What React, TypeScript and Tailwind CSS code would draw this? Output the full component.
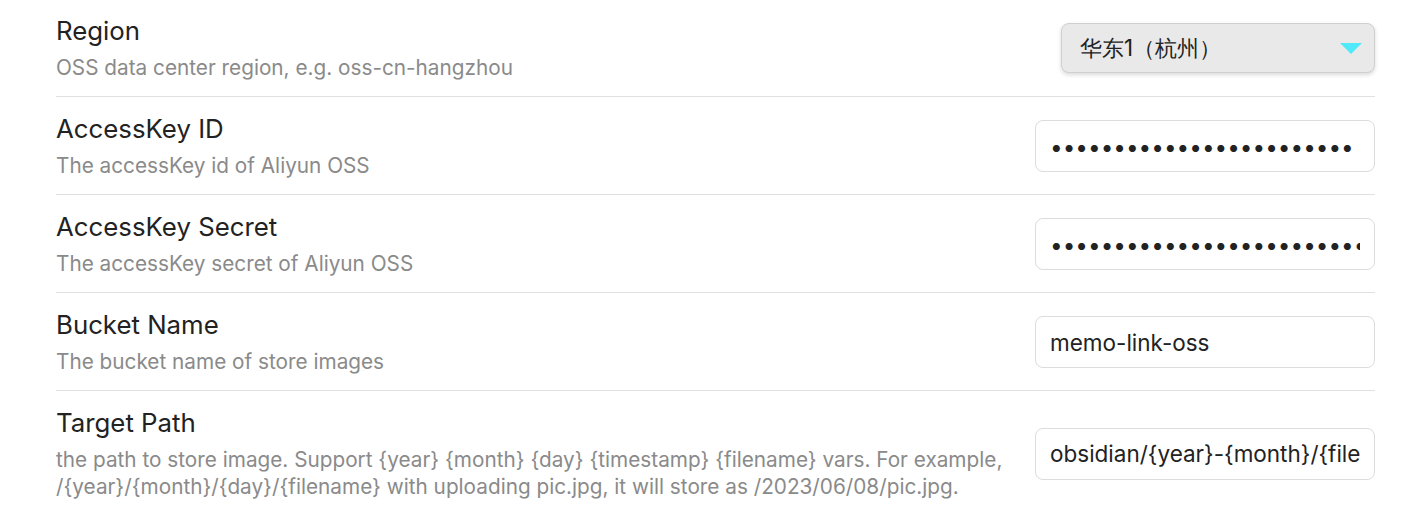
import { useState } from "react";

type Row = {
    name: string;
    desc: string[];
    kind: "select" | "text" | "password";
    value: string;
};

const rows: Row[] = [
    {
        name: "Region",
        desc: ["OSS data center region, e.g. oss-cn-hangzhou"],
        kind: "select",
        value: "华东1（杭州）",
    },
    {
        name: "AccessKey ID",
        desc: ["The accessKey id of Aliyun OSS"],
        kind: "password",
        value: "LTAI5tQ8xk2mNvP4rZbWc7Hd",
    },
    {
        name: "AccessKey Secret",
        desc: ["The accessKey secret of Aliyun OSS"],
        kind: "password",
        value: "q9XvB2mLk7TnR4sWp8ZcYd3FhJ6gAe",
    },
    {
        name: "Bucket Name",
        desc: ["The bucket name of store images"],
        kind: "text",
        value: "memo-link-oss",
    },
    {
        name: "Target Path",
        desc: [
            "the path to store image. Support {year} {month} {day} {timestamp} {filename} vars. For example,",
            "/{year}/{month}/{day}/{filename} with uploading pic.jpg, it will store as /2023/06/08/pic.jpg.",
        ],
        kind: "text",
        value: "obsidian/{year}-{month}/{filename}",
    },
];

const Control = ({ row }: { row: Row }) => {
    const [value, setValue] = useState(row.value);

    if (row.kind === "select") {
        return (
            <div className="flex items-center justify-between w-[314px] h-[50px] pl-[18px] pr-[12px] bg-[#e9e9e9] border border-[#cfcfcf] rounded-[8px] shadow-[0_2px_4px_rgba(0,0,0,0.15)]">
                <span className="text-[22.3px] text-[#222]">{value}</span>
                <svg width="22" height="11" viewBox="0 0 22 11">
                    <path d="M0 0 H22 L11 11 Z" fill="#4fe9fa" />
                </svg>
            </div>
        );
    }

    return (
        <input
            type={row.kind}
            value={value}
            onChange={(e) => setValue(e.target.value)}
            className="w-[340px] h-[52px] px-[14px] bg-white border border-[#dcdcdc] rounded-[8px] text-[22.5px] text-[#222] outline-none"
        />
    );
};

const App = () => {
    return (
        <div className="w-full min-h-screen bg-white pl-[56px] pr-[50px] font-['Inter',sans-serif]">
            <div className="-mt-px">
                {rows.map((row, i) => (
                    <div
                        key={row.name}
                        className={`flex items-center pt-[16px] pb-[15px] ${i > 0 ? "border-t border-[#e0e0e0]" : ""}`}
                    >
                        <div className="flex-1 mr-[30px]">
                            <div className="text-[25.8px] leading-[32px] text-[#222]">
                                {row.name}
                            </div>
                            <div className="mt-[7px] text-[20.75px] leading-[27px] text-[#8a8a8a]">
                                {row.desc.map((line) => (
                                    <div key={line} className="whitespace-nowrap">
                                        {line}
                                    </div>
                                ))}
                            </div>
                        </div>
                        <Control row={row} />
                    </div>
                ))}
            </div>
        </div>
    );
};

export default App;
